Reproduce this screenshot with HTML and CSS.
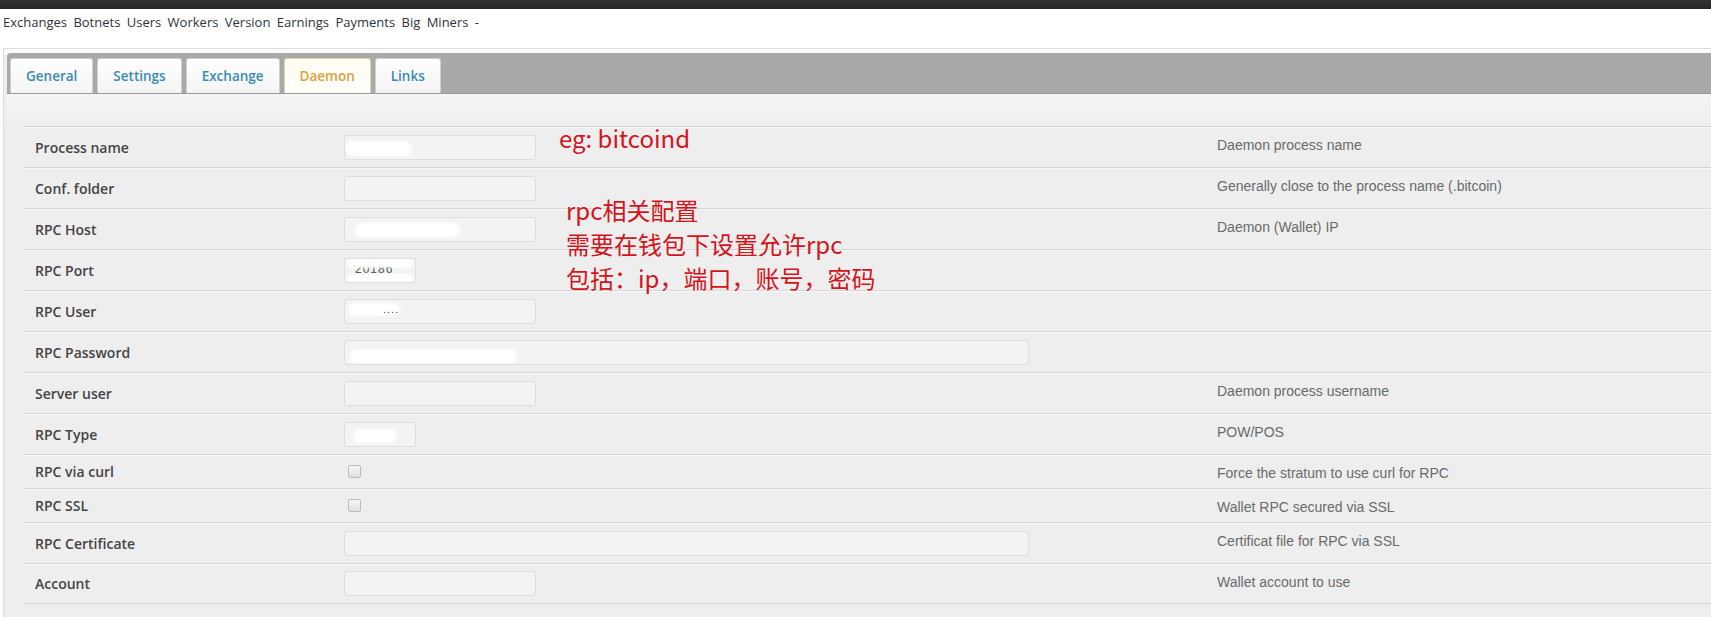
FILE: index.html
```html
<!DOCTYPE html>
<html>
<head>
<meta charset="utf-8">
<link rel="stylesheet" href="styles.css">
</head>
<body>
<div class="topbar"></div>
<div class="nav">
  <a>Exchanges</a> <a>Botnets</a> <a>Users</a> <a>Workers</a> <a>Version</a> <a>Earnings</a> <a>Payments</a> <a>Big Miners</a> <span>-</span>
</div>
<div class="tabs">
  <div class="bar">
    <div class="tab">General</div>
    <div class="tab">Settings</div>
    <div class="tab">Exchange</div>
    <div class="tab active">Daemon</div>
    <div class="tab">Links</div>
  </div>
  <div class="panel">
    <div class="row">
      <div class="label">Process name</div>
      <div class="cell"><div class="field w-md"><span class="blob" style="left:1px;top:5px;width:66px;height:15px"></span></div></div>
      <div class="desc">Daemon process name</div>
    </div>
    <div class="row">
      <div class="label">Conf. folder</div>
      <div class="cell"><div class="field w-md"></div></div>
      <div class="desc">Generally close to the process name (.bitcoin)</div>
    </div>
    <div class="row">
      <div class="label">RPC Host</div>
      <div class="cell"><div class="field w-md"><span class="blob" style="left:10px;top:5px;width:105px;height:14px"></span></div></div>
      <div class="desc">Daemon (Wallet) IP</div>
    </div>
    <div class="row">
      <div class="label">RPC Port</div>
      <div class="cell"><div class="field w-sm"><span class="val port">20186</span><span class="blob" style="left:2px;top:-3px;width:66px;height:12px"></span><span class="blob" style="left:2px;top:15px;width:66px;height:11px"></span></div></div>
      <div class="desc"></div>
    </div>
    <div class="row">
      <div class="label">RPC User</div>
      <div class="cell"><div class="field w-md"><span class="blob" style="left:3px;top:3px;width:52px;height:13px"></span><span class="val dots">....</span></div></div>
      <div class="desc"></div>
    </div>
    <div class="row">
      <div class="label">RPC Password</div>
      <div class="cell"><div class="field w-lg"><span class="blob" style="left:4px;top:8px;width:168px;height:14px"></span></div></div>
      <div class="desc"></div>
    </div>
    <div class="row">
      <div class="label">Server user</div>
      <div class="cell"><div class="field w-md"></div></div>
      <div class="desc">Daemon process username</div>
    </div>
    <div class="row">
      <div class="label">RPC Type</div>
      <div class="cell"><div class="field w-sm"><span class="blob" style="left:8px;top:6px;width:44px;height:14px"></span></div></div>
      <div class="desc">POW/POS</div>
    </div>
    <div class="row short">
      <div class="label">RPC via curl</div>
      <div class="cell"><span class="check"></span></div>
      <div class="desc">Force the stratum to use curl for RPC</div>
    </div>
    <div class="row short">
      <div class="label">RPC SSL</div>
      <div class="cell"><span class="check"></span></div>
      <div class="desc">Wallet RPC secured via SSL</div>
    </div>
    <div class="row">
      <div class="label">RPC Certificate</div>
      <div class="cell"><div class="field w-lg"></div></div>
      <div class="desc">Certificat file for RPC via SSL</div>
    </div>
    <div class="row last">
      <div class="label">Account</div>
      <div class="cell"><div class="field w-md"></div></div>
      <div class="desc">Wallet account to use</div>
    </div>
  </div>
</div>
<div class="note note-eg">eg: bitcoind</div>
<div class="note note-rpc">rpc相关配置<br>需要在钱包下设置允许rpc<br>包括：ip，端口，账号，密码</div>
</body>
</html>
```
FILE: styles.css
```css
html, body {
  margin: 0;
  padding: 0;
  background: #fff;
  overflow: hidden;
}
body {
  position: relative;
  width: 1711px;
  height: 617px;
  font-family: "Open Sans", "Liberation Sans", sans-serif;
}
.topbar {
  height: 9px;
  background: linear-gradient(#333, #252525);
}
.nav {
  height: 39px;
  box-sizing: border-box;
  padding: 4px 0 0 3px;
  font-size: 13px;
  line-height: 18px;
  word-spacing: 3px;
  color: #2d3440;
  white-space: nowrap;
}
.tabs {
  margin-left: 3px;
  margin-right: -10px;
  border: 1px solid #dcdcdc;
  padding: 4px 3px 0 3px;
  background: linear-gradient(#fcfcfc 0, #fcfcfc 5px, #eeeeee 5px);
  height: 590px;
  box-sizing: border-box;
}
.bar {
  display: flex;
  gap: 4px;
  height: 41px;
  box-sizing: border-box;
  padding: 5px 0 0 3px;
  background: #a9a9a9;
  border-radius: 4px 4px 0 0;
  border-bottom: 1px solid #9a9a9a;
}
.tab {
  height: 35px;
  box-sizing: border-box;
  padding: 0 15px;
  border: 1px solid #d0d0d0;
  border-bottom: none;
  border-radius: 3px 3px 0 0;
  background: linear-gradient(#ffffff, #f4f4f4);
  font-weight: 600;
  font-size: 13.5px;
  line-height: 34px;
  color: #3a8bb2;
}
.tab.active {
  background: linear-gradient(#fffdf4, #fffefa);
  border-color: #e2d6ae;
  color: #d8a33e;
}
.panel {
  padding: 32px 0 0 17px;
  background: linear-gradient(#f5f5f5 0, #eeeeee 30px);
}
.row {
  display: grid;
  grid-template-columns: 320px 873px 1fr;
  height: 41px;
  box-sizing: border-box;
  border-top: 1px solid #d6d6d6;
  box-shadow: inset 0 1px 0 #f9f9f9;
}
.row.short {
  height: 34px;
}
.row.last {
  border-bottom: 1px solid #d6d6d6;
}
.label {
  align-self: center;
  padding-left: 11px;
  font-weight: 600;
  font-size: 14px;
  color: #444;
}
.row.short .label {
  align-self: start;
  padding-top: 7px;
}
.cell {
  display: flex;
  align-items: center;
}
.row.short .cell {
  align-items: flex-start;
  padding-top: 10px;
}
.desc {
  padding-top: 9px;
  font-family: "Liberation Sans", Arial, sans-serif;
  font-size: 14px;
  line-height: 18px;
  color: #6a6a6a;
}
.field {
  position: relative;
  height: 25px;
  box-sizing: border-box;
  border: 1px solid #dedede;
  border-radius: 3px;
  background: #f3f3f3;
  overflow: hidden;
}
.w-md { width: 192px; }
.w-sm { width: 72px; }
.w-lg { width: 685px; }
.blob {
  position: absolute;
  background: #fff;
  border-radius: 8px;
  filter: blur(1.5px);
}
.val {
  position: absolute;
  font-family: "Liberation Sans", Arial, sans-serif;
  font-size: 12px;
  color: #444;
}
.port {
  left: 10px;
  top: 3px;
  letter-spacing: 1px;
}
.dots {
  left: 38px;
  top: 3px;
  font-size: 11px;
  letter-spacing: 1px;
}
.check {
  width: 11px;
  height: 11px;
  margin-left: 4px;
  border: 1px solid #bdbdbd;
  border-radius: 2px;
  background: linear-gradient(#f6f6f6, #e0e0e0);
}
.note {
  position: absolute;
  font-family: "Noto Sans CJK SC", "Liberation Sans", sans-serif;
  font-size: 24px;
  line-height: 34px;
  color: #d3141b;
  white-space: nowrap;
}
.note-eg {
  left: 559px;
  top: 121px;
}
.note-rpc {
  left: 566px;
  top: 193px;
}
```
